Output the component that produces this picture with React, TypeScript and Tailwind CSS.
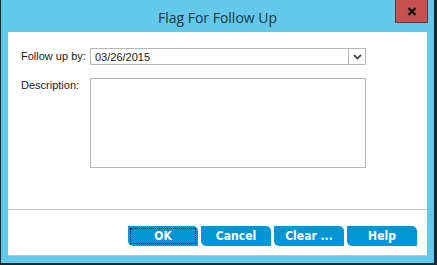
const labelFont = "font-['Liberation_Sans',Arial,sans-serif]";

function HpButton({ label, focused }: { label: string; focused?: boolean }) {
  return (
    <button className="relative flex h-[20px] w-[70px] items-center justify-center rounded-tr-[5px] rounded-bl-[5px] bg-[#0096d6] font-['DejaVu_Sans_Condensed','DejaVu_Sans',sans-serif] text-[12px] font-bold leading-none text-white">
      {focused && (
        <span className="absolute inset-[2px] border border-dotted border-black" />
      )}
      {label}
    </button>
  );
}

export default function App() {
  return (
    <div className="flex h-[265px] w-[437px] bg-[#1c2a33] pb-[2px] pl-px pr-[3px]">
      <div className="flex w-[433px] flex-col bg-[#63c9ea]">
        {/* caption */}
        <div className="relative flex h-[32px] items-center justify-center pt-[3px]">
          <span className="font-['Open_Sans','Noto_Sans',sans-serif] text-[14px] text-[#1d3442]">
            Flag For Follow Up
          </span>
          <div className="absolute right-[6px] top-0 flex h-[23px] w-[33px] items-center justify-center border border-t-0 border-[#5b3b3b] bg-[#c75050]">
            <svg width="10" height="9" viewBox="0 0 10 9">
              <path d="M1.5 1 L8.5 8 M8.5 1 L1.5 8" stroke="#111" strokeWidth="2.4" />
            </svg>
          </div>
        </div>

        {/* client area */}
        <div className={`mx-[7px] mb-[7px] flex flex-1 flex-col border-b border-[#c4c4c4] bg-white text-[11px] text-[#1a1a1a] ${labelFont}`}>
          <div className="px-[13px] pt-[16px]">
            <div className="flex h-[17px] items-center">
              <span className="w-[69px]">Follow up by:</span>
              <div className="flex h-[17px] w-[276px] border border-[#b5b5b5]">
                <span className="flex flex-1 items-center pl-[4px] pt-px">03/26/2015</span>
                <span className="flex w-[17px] items-center justify-center border-l border-[#b5b5b5]">
                  <svg width="9" height="6" viewBox="0 0 9 6">
                    <path d="M1 1 L4.5 4.5 L8 1" stroke="#4a4a4a" strokeWidth="1.8" fill="none" />
                  </svg>
                </span>
              </div>
            </div>
            <div className="mt-[13px] flex">
              <span className="w-[69px] leading-[14px]">Description:</span>
              <div className="h-[90px] w-[276px] border border-[#b5b5b5]" />
            </div>
          </div>

          <div className="mt-[41px] h-px bg-[#cacaca]" />

          <div className="mt-[16px] flex justify-end gap-[3px] pr-[10px]">
            <HpButton label="OK" focused />
            <HpButton label="Cancel" />
            <HpButton label="Clear ..." />
            <HpButton label="Help" />
          </div>
        </div>
      </div>
    </div>
  );
}
